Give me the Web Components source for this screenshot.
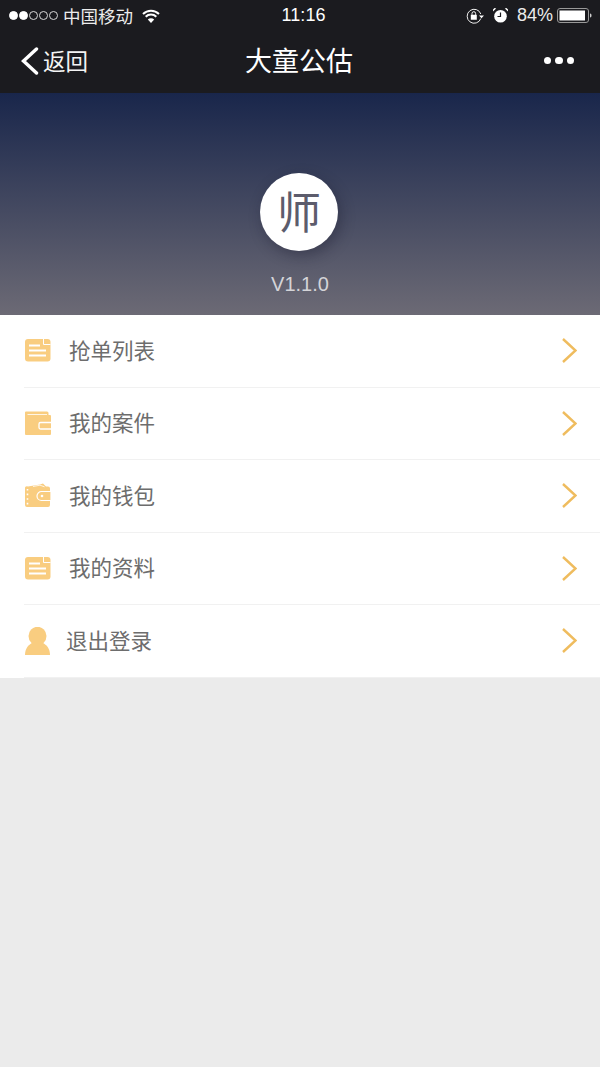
<!DOCTYPE html>
<html lang="zh"><head><meta charset="utf-8"><title>大童公估</title>
<style>
html,body{margin:0;padding:0;height:100%}
body{background:#ebebeb;font-family:"Noto Sans CJK SC","Liberation Sans",sans-serif;overflow:hidden}
</style></head><body>
<app-header></app-header>
<hero-panel></hero-panel>
<menu-list>
<menu-row icon="doc" label="抢单列表"></menu-row>
<menu-row icon="folder" label="我的案件"></menu-row>
<menu-row icon="wallet" label="我的钱包"></menu-row>
<menu-row icon="doc" label="我的资料"></menu-row>
<menu-row icon="user" label="退出登录" tight></menu-row>
</menu-list>
<script>
const ICONS={
doc:`<svg width="26" height="24" viewBox="0 0 26 24"><rect x="0" y="1" width="25.500" height="22.500" rx="3" fill="#f9cd80"/><path fill="none" stroke="#fff" stroke-width="1" d="M18.500 1V6.500H25.500"/><path fill="#fff" d="M4 6.500H15V8.500H4ZM4 11.500H21V13.500H4ZM4 16.500H21V18.500H4Z"/></svg>`,
folder:`<svg width="26" height="24" viewBox="0 0 26 24"><path fill="#f9cd80" d="M1 .5H22a1.500 1.500 0 0 1 1.500 1.500V4H25a1 1 0 0 1 1 1V23a1 1 0 0 1-1 1H1a1 1 0 0 1-1-1V1.500A1 1 0 0 1 1 .5Z"/><path fill="#fff" opacity=".8" d="M2.500 3H22V4H2.500Z"/><path fill="none" stroke="#fff" stroke-width="1.300" d="M26 11.500H15.500a1.500 1.500 0 0 0-1.500 1.500v3.500a1.500 1.500 0 0 0 1.500 1.500H26"/></svg>`,
wallet:`<svg width="26" height="24" viewBox="0 0 26 24"><path fill="#f9cd80" d="M3 3.500 15 1.500 18 .5 21 3.500H23a2 2 0 0 1 2 2V22a2 2 0 0 1-2 2H2a2 2 0 0 1-2-2V5.500A2 2 0 0 1 3 3.500Z"/><path fill="#f9cd80" stroke="#fff" stroke-width="1.200" d="M26 8.500H16.500a4.500 4.500 0 0 0-4.500 4.500v0a4.500 4.500 0 0 0 4.500 4.500H26Z"/><circle cx="17" cy="13" r="1.300" fill="#fff"/><path stroke="#fff" stroke-width="1.600" stroke-dasharray="1.600 3" d="M2.500 6V22"/><path stroke="#fff" stroke-width=".8" fill="none" d="M8 3.500 15 2.200 19.500 3.800"/></svg>`,
user:`<svg width="26" height="28" viewBox="0 0 26 28"><ellipse cx="12.500" cy="9" rx="9" ry="9.200" fill="#f9cd80"/><path fill="#f9cd80" d="M0 28C0 21.500 3.500 17.500 8 15.500H17C21.500 17.500 25 21.500 25 28Z"/></svg>`};
function def(name,html){customElements.define(name,class extends HTMLElement{
constructor(){super();this.attachShadow({mode:'open'});}
connectedCallback(){this.shadowRoot.innerHTML=typeof html==='function'?html(this):html;}
});}
def('status-bar',`<style>
:host{display:grid;grid-template-columns:1fr auto 1fr;align-items:center;height:31px;color:#fff;font-size:17.500px;padding:0 8px 0 9px}
.l,.r{display:flex;align-items:center}
.r{justify-content:flex-end}
.d{width:9px;height:9px;border-radius:50%;box-sizing:border-box;border:1px solid #d8d8d8;margin-right:1px}
.f{background:#fff;border-color:#fff}
.op{margin:0 9px 0 4px;color:#ececec;line-height:20px}
.t{font:500 18px "Liberation Sans",sans-serif;letter-spacing:.1px;padding-left:6px}
.p{font:18px "Liberation Sans",sans-serif;margin:0 4px 0 9px;color:#ececec}
svg{display:block}
.a{margin-left:9px}
</style>
<div class="l"><span class="d f"></span><span class="d f"></span><span class="d"></span><span class="d"></span><span class="d"></span>
<span class="op">中国移动</span>
<svg width="18" height="14" viewBox="0 0 18 14"><path fill="none" stroke="#fff" stroke-width="2" d="M1 5a11.500 11.500 0 0 1 16 0M3.700 7.800a7.500 7.500 0 0 1 10.600 0"/><path fill="#fff" d="M9 14 5.800 10.600a4.500 4.500 0 0 1 6.400 0Z"/></svg></div>
<div class="t">11:16</div>
<div class="r">
<svg width="18" height="16" viewBox="0 0 18 16"><path fill="none" stroke="#eee" stroke-width="1" d="M14.800 10.500A7 7 0 1 1 14.800 6"/><path fill="#fff" d="M13 7.500h5l-2.500 2.700ZM4.800 6.800H10.800V11.800H4.800Z"/><path fill="none" stroke="#fff" d="M6 6.800V5.500a1.800 1.800 0 0 1 3.600 0v1.300"/></svg>
<svg class="a" width="15" height="15" viewBox="0 0 15 15"><circle cx="7.500" cy="8.200" r="6.300" fill="#fff"/><path fill="none" stroke="#1b1b1f" stroke-width="1.200" d="M7.500 4.500V8.500H4.500"/><path fill="#fff" d="M0 3.500 3.200 .5 1.500 0 0 1.500ZM15 3.500 11.800 .5 13.500 0 15 1.500Z"/></svg>
<span class="p">84%</span>
<svg width="35" height="15" viewBox="0 0 35 15"><rect x=".5" y=".5" width="31" height="14" rx="2.500" fill="none" stroke="#999"/><rect x="2.500" y="2.500" width="25.500" height="10" fill="#fff"/><path fill="#ccc" d="M33 5.500c1 0 1.500.7 1.500 2s-.5 2-1.500 2Z"/></svg>
</div>`);
def('nav-bar',`<style>
:host{display:grid;grid-template-columns:1fr auto 1fr;align-items:center;height:62px;color:#fff;padding:0 25px 5px 23px;box-sizing:border-box}
.b{display:flex;align-items:center;gap:4px;font-size:22.500px;color:#f4f4f4;margin-left:-2px}
.b svg{margin-top:2px}
.b span{margin-top:1px}
.n{font-size:27px;font-weight:400;line-height:36px}
.m{display:flex;justify-content:flex-end;gap:4px;margin:2px 1px 0 0}
.m i{width:7.500px;height:7.500px;border-radius:50%;background:#fff}
svg{display:block}
</style>
<div class="b"><svg width="18" height="28" viewBox="0 0 18 28"><path fill="none" stroke="#fff" stroke-width="3.400" stroke-linecap="round" d="M15.500 2 2.500 14 15.500 26"/></svg><span>返回</span></div>
<div class="n">大童公估</div>
<div class="m"><i></i><i></i><i></i></div>`);
def('app-header',`<style>:host{display:block;background:#1b1b1f;height:93px}</style><status-bar></status-bar><nav-bar></nav-bar>`);
def('hero-panel',`<style>
:host{display:flex;flex-direction:column;align-items:center;height:222px;box-sizing:border-box;padding:80px 2px 0 0;background:linear-gradient(#19264b,#6c6a75)}
.c{width:78px;height:78px;border-radius:50%;background:#fff;box-shadow:3px 5px 14px rgba(20,20,40,.35);display:flex;align-items:center;justify-content:center;font-size:44px;font-weight:400;color:#5c5c6c;line-height:1}
.c span{display:block;margin-top:-4px}
.v{margin-top:21px;font:20px/24px "Liberation Sans",sans-serif;color:#d4d4d8;padding-left:2px}
</style><div class="c"><span>师</span></div><div class="v">V1.1.0</div>`);
def('menu-list',`<style>:host{display:block;background:#fff}</style><slot></slot>`);
def('menu-row',h=>`<style>
:host{display:block;padding-left:24px}
.r{display:flex;align-items:center;height:72.500px;box-sizing:border-box;border-bottom:1px solid #f1f1f1;padding:0 23px 3px 1px}
.i{width:26px;display:flex;flex:none;margin-top:${h.hasAttribute('tight')?4:2}px}
.l{margin-left:${h.hasAttribute('tight')?15:18}px;font-size:21.500px;color:#6d6d6d;flex:1;font-weight:400}
svg{display:block}
.c{margin-top:3px}
</style><div class="r"><span class="i">${ICONS[h.getAttribute('icon')]}</span><span class="l">${h.getAttribute('label')}</span>
<svg class="c" width="15" height="25" viewBox="0 0 15 25"><path fill="none" stroke="#efbc5e" stroke-width="2.400" d="M1 1 13.500 12.500 1 24"/></svg></div>`);
</script></body></html>
